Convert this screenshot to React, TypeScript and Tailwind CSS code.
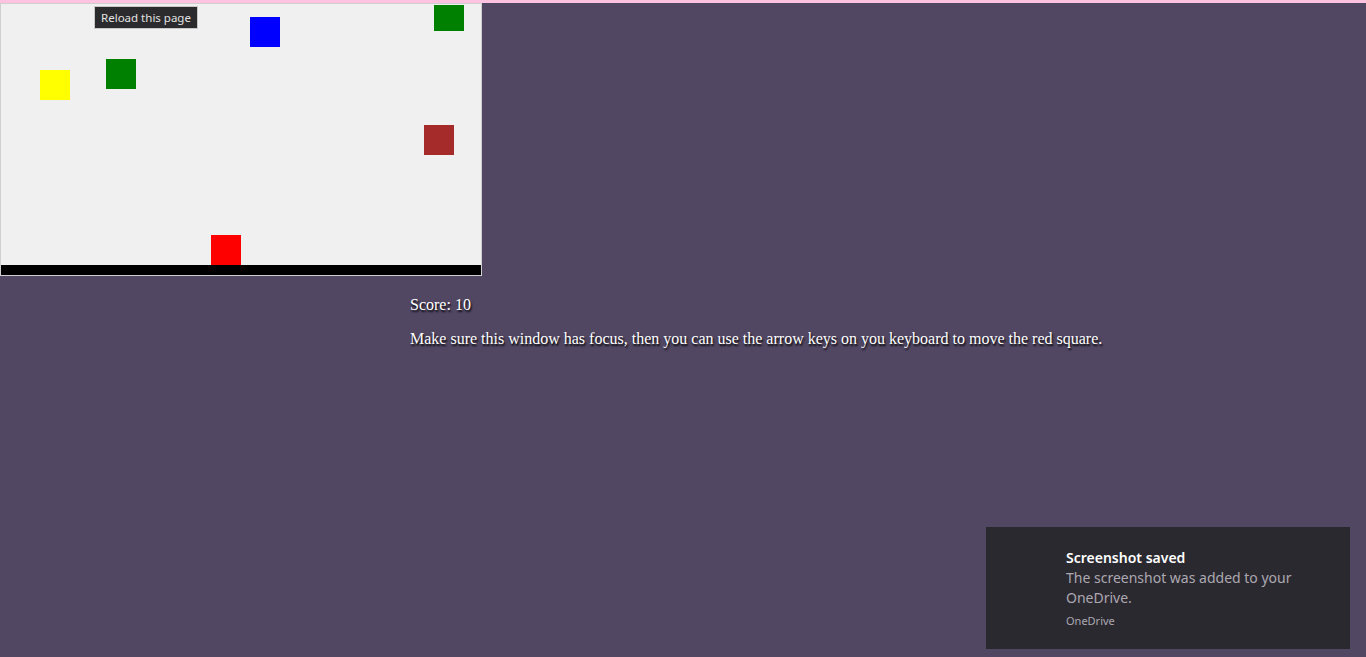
import React from 'react';

const squares = [
  { x: 39, y: 66, color: 'bg-[#ffff00]' },
  { x: 105, y: 55, color: 'bg-[#008000]' },
  { x: 249, y: 13, color: 'bg-[#0000ff]' },
  { x: 433, y: 1, h: 26, color: 'bg-[#008000]' },
  { x: 423, y: 121, color: 'bg-[#a52a2a]' },
  { x: 210, y: 231, color: 'bg-[#ff0000]' },
];

export default function App() {
  return (
    <div className="relative flex h-[657px] w-full flex-col overflow-hidden bg-[#514763]">
      <div className="h-[3px] bg-[#fdc2df]" />

      {/* game board */}
      <div className="relative h-[273px] w-[482px] border border-[#cfcfcf] bg-[#f0f0f0]">
        {squares.map((s, i) => (
          <div
            key={i}
            className={`absolute w-[30px] ${s.color}`}
            style={{ left: s.x, top: s.y, height: s.h ?? 30 }}
          />
        ))}
        <div className="absolute bottom-0 left-0 right-0 h-[10px] bg-black" />
      </div>

      <div
        className="flex flex-col gap-4 pl-[410px] pt-[20px] text-[16px] leading-[18px] text-white [text-shadow:1px_2px_2px_#000]"
        style={{ fontFamily: '"Liberation Serif", serif' }}
      >
        <p>Score: 10</p>
        <p>
          Make sure this window has focus, then you can use the arrow keys on you keyboard to move the red square.
        </p>
      </div>

      {/* browser tooltip */}
      <div
        className="absolute left-[94px] top-[6px] flex h-[23px] w-[104px] items-center justify-center border border-[#c8c8c8] bg-[#2b2b2d] text-[11.5px] text-[#e2e2e2]"
        style={{ fontFamily: '"Noto Sans", sans-serif' }}
      >
        Reload this page
      </div>

      {/* windows toast */}
      <div
        className="absolute left-[986px] top-[527px] flex h-[122px] w-[364px] flex-col bg-[#2b2930] pl-[80px] pt-[21px]"
        style={{ fontFamily: '"Noto Sans", sans-serif' }}
      >
        <div className="text-[14px] font-semibold leading-[20px] text-white">Screenshot saved</div>
        <div className="text-[14px] leading-[20px] text-[#aba8b0]">
          The screenshot was added to your
          <br />
          OneDrive.
        </div>
        <div className="mt-[5px] text-[11px] leading-[16px] text-[#aba8b0]">OneDrive</div>
      </div>
    </div>
  );
}
